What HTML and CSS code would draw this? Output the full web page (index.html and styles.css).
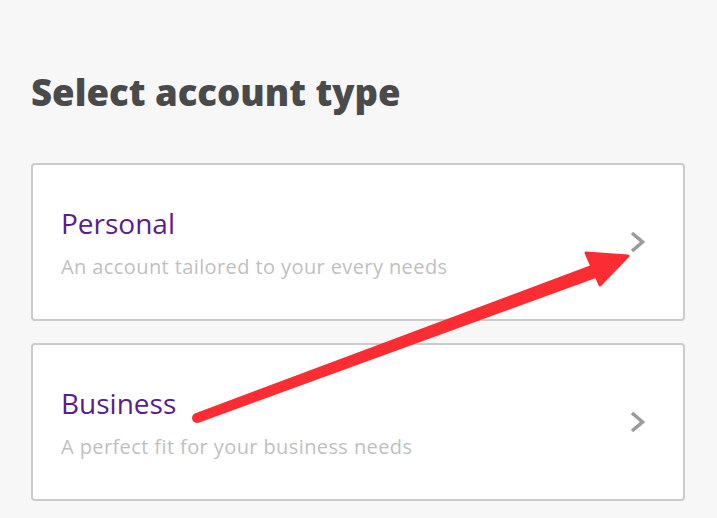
FILE: index.html
```html
<!DOCTYPE html>
<html lang="en">
<head>
<meta charset="utf-8">
<title>Select account type</title>
<link rel="stylesheet" href="styles.css">
</head>
<body>
<main class="page">
  <h1 class="heading">Select account type</h1>
  <div class="options">
    <a class="option" href="#">
      <div class="option-text">
        <div class="option-title">Personal</div>
        <div class="option-desc">An account tailored to your every needs</div>
      </div>
      <svg class="chevron" width="15" height="22" viewBox="0 0 15 22"><polyline points="2,2 12.5,11 2,20" fill="none" stroke="#9b9b9b" stroke-width="3.6"/></svg>
    </a>
    <a class="option" href="#">
      <div class="option-text">
        <div class="option-title">Business</div>
        <div class="option-desc">A perfect fit for your business needs</div>
      </div>
      <svg class="chevron" width="15" height="22" viewBox="0 0 15 22"><polyline points="2,2 12.5,11 2,20" fill="none" stroke="#9b9b9b" stroke-width="3.6"/></svg>
    </a>
  </div>
</main>
<svg class="annotation" width="717" height="518" viewBox="0 0 717 518">
  <polygon points="195.4,413.3 593.3,264.2 597.9,277.3 198.6,422.7" fill="#fc2d32"/>
  <circle cx="197" cy="418" r="5" fill="#fc2d32"/>
  <polygon points="628,256 586,253 600,285" fill="#fc2d32" stroke="#fc2d32" stroke-width="3" stroke-linejoin="round"/>
</svg>
</body>
</html>
```
FILE: styles.css
```css
html, body {
  margin: 0;
  padding: 0;
  background: #f7f7f7;
}
body {
  width: 717px;
  height: 518px;
  overflow: hidden;
  position: relative;
  font-family: "Open Sans", "Liberation Sans", sans-serif;
}
.page {
  padding: 69px 32px 0 31px;
}
.heading {
  margin: 0;
  font-family: "Open Sans", sans-serif;
  font-weight: 800;
  font-size: 36.5px;
  line-height: 46px;
  color: #4a4a4a;
}
.options {
  margin-top: 48px;
  display: flex;
  flex-direction: column;
  gap: 22px;
}
.option {
  display: flex;
  align-items: center;
  justify-content: space-between;
  height: 158px;
  box-sizing: border-box;
  border: 2px solid #cbcbcb;
  border-radius: 4px;
  background: #ffffff;
  padding: 0 38px 0 28px;
  text-decoration: none;
}
.option-text {
  display: flex;
  flex-direction: column;
  gap: 15px;
  padding-top: 3px;
}
.option-title {
  font-size: 28px;
  line-height: 32px;
  color: #5a1d8c;
  font-weight: 500;
}
.option-desc {
  font-size: 20px;
  line-height: 26px;
  letter-spacing: 0.4px;
  color: #bfbfbf;
}
.chevron {
  display: block;
}
.annotation {
  position: absolute;
  left: 0;
  top: 0;
  pointer-events: none;
}
```
